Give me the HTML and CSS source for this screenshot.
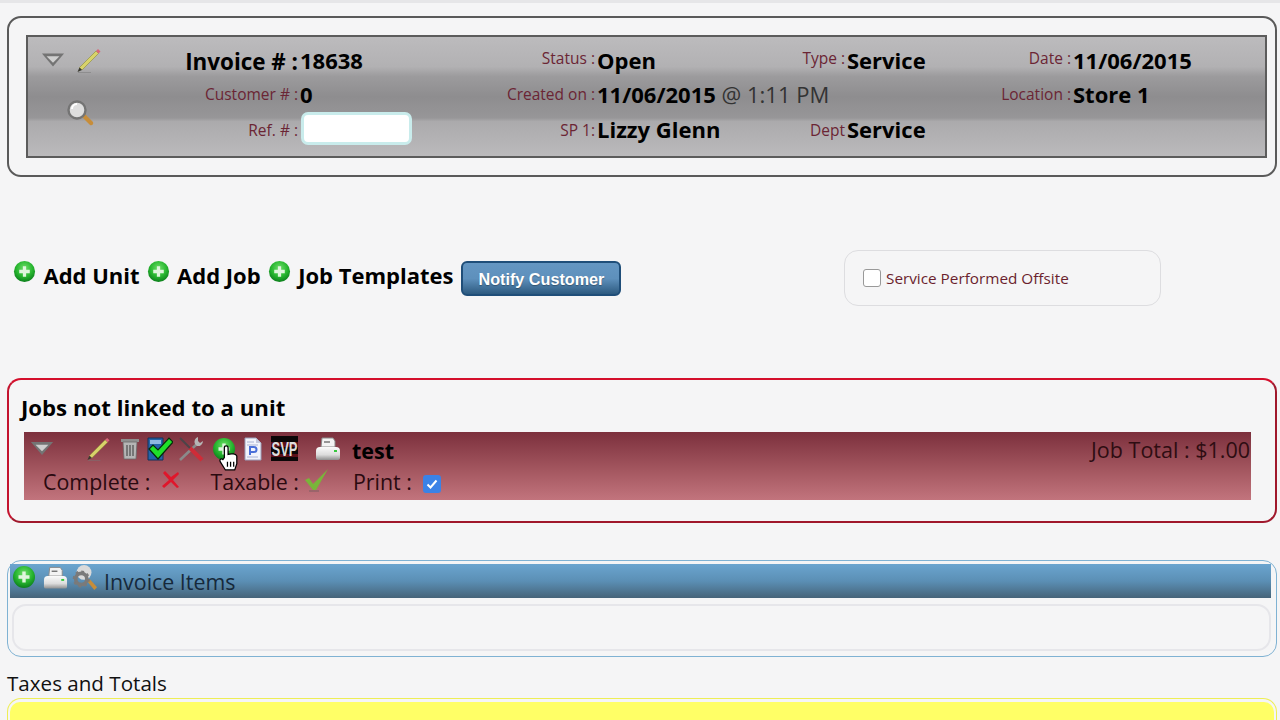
FILE: index.html
```html
<!DOCTYPE html>
<html lang="en">
  <head>
    <meta charset="UTF-8" />
    <title>Invoice 18638</title>
    <link rel="stylesheet" href="styles.css">
  </head>
  <body>
    <!-- Shared icons -->
    <svg class="icon-defs" width="0" height="0">
      <defs>
        <radialGradient id="greenBall" cx="50%" cy="35%" r="65%">
          <stop offset="0%" stop-color="#6fe06a" />
          <stop offset="60%" stop-color="#27b52f" />
          <stop offset="100%" stop-color="#0c7f1c" />
        </radialGradient>
        <linearGradient id="printerBody" x1="0" y1="0" x2="0" y2="1">
          <stop offset="0%" stop-color="#fbfbfb" />
          <stop offset="60%" stop-color="#dcdcdc" />
          <stop offset="100%" stop-color="#8f8f8f" />
        </linearGradient>
        <symbol id="i-plus" viewBox="0 0 24 24">
          <circle cx="12" cy="12" r="11" fill="url(#greenBall)" />
          <path d="M12 6.500v11M6.500 12h11" stroke="#dff5dd" stroke-width="3.400" fill="none" />
        </symbol>
        <symbol id="i-arrow" viewBox="0 0 26 16">
          <path d="M1 1h24L13 15z" fill="#747474" />
          <path d="M6 4h14l-7 7z" fill="#cfcfcf" />
        </symbol>
        <symbol id="i-pencil" viewBox="0 0 26 26">
          <path d="M3.500 20.500L20 4l2.500 2.500L6 23z" fill="#d8d36a" stroke="#8b8a3a" stroke-width=".6" />
          <path d="M20 4l2-2 2.500 2.500-2 2z" fill="#d9667a" />
          <path d="M1.500 25l2-4.500L6 23z" fill="#3a3a30" />
          <path d="M2 25.500h13" stroke="#777" stroke-opacity=".5" stroke-width="1" />
        </symbol>
        <symbol id="i-glass" viewBox="0 0 28 28">
          <path d="M16 17l3-3 8 8c1 2-1 4-3 3z" fill="#c78d3a" />
          <circle cx="11" cy="10" r="8.500" fill="#dedede" stroke="#747474" stroke-width="2.400" />
          <path d="M6 9a5 5 0 0 1 5-5" stroke="#fff" stroke-width="2" fill="none" />
        </symbol>
        <symbol id="i-trash" viewBox="0 0 20 22">
          <path d="M1 1h18v3H1z" fill="#8f8f8f" />
          <path d="M3 4h14l-1 17H4z" fill="#b5b5b5" stroke="#6a6a6a" stroke-width=".8" />
          <path d="M7 7v11M10 7v11M13 7v11" stroke="#666" stroke-width="1.600" />
        </symbol>
        <symbol id="i-check-doc" viewBox="0 0 26 24">
          <path d="M1 1h15v22H1z" fill="#2464a8" stroke="#12305a" />
          <path d="M3 3h11v4H3z" fill="#8db8e0" />
          <path d="M2 12l4-4 5 5L22 1l4 4-15 17z" fill="#1fe02a" stroke="#062a0a" stroke-width="1.200" />
        </symbol>
        <symbol id="i-tools" viewBox="0 0 26 26">
          <path d="M2 24L20 7" stroke="#8a8a8a" stroke-width="2.600" />
          <path d="M20 1a5 5 0 0 0-3 7l2 2a5 5 0 0 0 6-5l-3 2-2-2z" fill="#b5b5b5" />
          <path d="M2 2l11 11" stroke="#4c4448" stroke-width="2" />
          <path d="M12 12l12 12" stroke="#cf2c38" stroke-width="4" />
        </symbol>
        <symbol id="i-doc" viewBox="0 0 18 24">
          <path d="M1 1h11l5 5v17H1z" fill="#f1f3fb" stroke="#9aa0bb" />
          <path d="M12 1v5h5z" fill="#c4c9de" />
          <path d="M3 5h7M3 8h11M3 20h11" stroke="#aab3d3" />
          <path d="M6 18V10h4a2.500 2.500 0 0 1 0 5H6" stroke="#4a6fd8" stroke-width="2" fill="none" />
        </symbol>
        <symbol id="i-printer" viewBox="0 0 26 24">
          <path d="M7 1h11l2 3v6H6z" fill="#f3f3f3" stroke="#8a8a8a" />
          <path d="M9 5h6" stroke="#777" stroke-width="1.500" />
          <path d="M1 14a4 4 0 0 1 4-4h16a4 4 0 0 1 4 4v7a2 2 0 0 1-2 2H3a2 2 0 0 1-2-2z" fill="url(#printerBody)" />
          <path d="M19 14h3" stroke="#35c83d" stroke-width="2" />
        </symbol>
        <symbol id="i-gear-glass" viewBox="0 0 28 28">
          <path d="M16 17l3-2 8 9-3 3z" fill="#c78d3a" />
          <circle cx="13" cy="8" r="8" fill="#dadada" />
          <circle cx="10" cy="15" r="6" fill="none" stroke="#7a7a7a" stroke-width="4" />
          <circle cx="10" cy="15" r="8.200" fill="none" stroke="#7a7a7a" stroke-width="2" stroke-dasharray="3 3.400" />
        </symbol>
        <symbol id="i-cross" viewBox="0 0 20 20">
          <path d="M2 3l2-2 6 6 7-5 1 2-6 6 6 7-2 1-6-6-7 6-2-2 7-6z" fill="#e0162b" />
        </symbol>
        <symbol id="i-tick" viewBox="0 0 26 24">
          <path d="M1 12l4-2 4 6L24 1l-12 21h-3z" fill="#79b53a" />
          <path d="M5 23h10" stroke="#555" stroke-opacity=".4" stroke-width="1.500" />
        </symbol>
      </defs>
    </svg>

    <div class="strip"></div>

    <!-- Invoice header -->
    <div class="invoice-box">
      <div class="invoice-panel">
        <div class="tools-top">
          <svg class="ic-arrow"><use href="#i-arrow" /></svg>
          <svg class="ic-pencil"><use href="#i-pencil" /></svg>
        </div>
        <div class="label head">Invoice # :</div>
        <div class="value">18638</div>
        <div class="label raised">Status :</div>
        <div class="value">Open</div>
        <div class="label raised">Type :</div>
        <div class="value">Service</div>
        <div class="label raised">Date :</div>
        <div class="value">11/06/2015</div>

        <div class="tools-low">
          <svg class="ic-glass"><use href="#i-glass" /></svg>
        </div>
        <div class="label">Customer # :</div>
        <div class="value">0</div>
        <div class="label">Created on :</div>
        <div class="value">11/06/2015 <span class="time">@ 1:11 PM</span></div>
        <div class="skip"></div>
        <div class="label">Location :</div>
        <div class="value">Store 1</div>

        <div class="label low">Ref. # :</div>
        <div class="value"><input class="ref-input" type="text" /></div>
        <div class="label low">SP 1:</div>
        <div class="value">Lizzy Glenn</div>
        <div class="label low">Dept</div>
        <div class="value">Service</div>
      </div>
    </div>

    <!-- Add links -->
    <div class="actions">
      <div class="add-links">
        <svg class="ic-plus"><use href="#i-plus" /></svg>
        <span class="add-text">Add Unit</span>
        <svg class="ic-plus"><use href="#i-plus" /></svg>
        <span class="add-text">Add Job</span>
        <svg class="ic-plus"><use href="#i-plus" /></svg>
        <span class="add-text">Job Templates</span>
        <button class="notify">Notify Customer</button>
      </div>
      <label class="offsite">
        <span class="check-empty"></span>
        Service Performed Offsite
      </label>
    </div>

    <!-- Jobs -->
    <div class="jobs-box">
      <div class="jobs-title">Jobs not linked to a unit</div>
      <div class="job-band">
        <div class="job-row">
          <svg class="ic-arrow job-arrow"><use href="#i-arrow" /></svg>
          <svg class="ic-pencil job-pencil"><use href="#i-pencil" /></svg>
          <svg class="job-trash"><use href="#i-trash" /></svg>
          <svg class="job-check"><use href="#i-check-doc" /></svg>
          <svg class="job-tools"><use href="#i-tools" /></svg>
          <span class="job-plus">
            <svg class="ic-plus"><use href="#i-plus" /></svg>
            <svg class="hand" viewBox="0 0 20 26">
              <path d="M6 13V3.500a1.800 1.800 0 0 1 3.600 0V10c3-1 7.400-.6 8.400 1.500V19l-2 6H7l-5-8c-1-2 1-3.500 2.600-2z" fill="#fff" stroke="#000" stroke-width="1.200" />
              <path d="M9 17v5M12 17v5M15 17v5" stroke="#000" stroke-width="1.200" />
            </svg>
          </span>
          <svg class="job-doc"><use href="#i-doc" /></svg>
          <svg class="job-logo" viewBox="0 0 27 25">
            <rect width="27" height="25" fill="#0c0708" />
            <path d="M0 6h27v5H0zM0 18h27v3H0z" fill="#5a1018" />
            <text x=".5" y="12.500" transform="scale(1 1.600)" font-family="Liberation Sans" font-size="13" font-weight="700" fill="#ddd">SVP</text>
          </svg>
          <svg class="job-printer"><use href="#i-printer" /></svg>
          <span class="job-name">test</span>
          <span class="job-total">Job Total : $1.00</span>
        </div>
        <div class="job-row job-flags">
          <span>Complete :</span>
          <svg class="flag-cross"><use href="#i-cross" /></svg>
          <span class="flag-taxable">Taxable :</span>
          <svg class="flag-tick"><use href="#i-tick" /></svg>
          <span class="flag-print">Print :</span>
          <span class="check-on">
            <svg viewBox="0 0 18 18"><path d="M4.500 9.500l3 3 6-7" stroke="#fff" stroke-width="2" fill="none" /></svg>
          </span>
        </div>
      </div>
    </div>

    <!-- Invoice items -->
    <div class="items-box">
      <div class="items-head">
        <svg class="ic-plus"><use href="#i-plus" /></svg>
        <svg class="items-printer"><use href="#i-printer" /></svg>
        <svg class="items-gear"><use href="#i-gear-glass" /></svg>
        <span class="items-title">Invoice Items</span>
      </div>
      <div class="items-body"></div>
    </div>

    <div class="totals-title">Taxes and Totals</div>
    <div class="totals-box">
      <div class="totals-fill"></div>
    </div>
  </body>
</html>
```

FILE: styles.css
```css
html,
body {
  height: 720px;
  overflow: hidden;
}
body {
  margin: 0;
  padding: 0;
  background-color: #f5f5f6;
  font-family: "Open Sans", sans-serif;
  color: #000;
}
svg {
  display: block;
  flex: none;
}
.icon-defs {
  position: absolute;
}
.strip {
  height: 3px;
  background-color: #e6e6e8;
}

/* Invoice header */
.invoice-box {
  margin: 13px 3px 0 7px;
  height: 161px;
  box-sizing: border-box;
  padding: 17px 8px 0 17px;
  border: 2px solid #5a5a5a;
  border-radius: 14px;
}
.invoice-panel {
  box-sizing: border-box;
  height: 123px;
  padding: 6px 0 0;
  border: 2px solid #5c5c5c;
  background: linear-gradient(to bottom, #bcbbbd 0%, #b2b1b3 25%, #9c9b9d 33%, #8e8d8f 50%, #979698 68%, #abaaac 71%, #bbbabc 100%);
  display: grid;
  grid-template-columns: 80px 190px 202px 95px 186px 64px 115px 111px 1fr;
  grid-template-rows: 33px 35px 35px;
  align-items: center;
}
.tools-top {
  display: flex;
  align-items: center;
  padding-left: 13px;
}
.tools-low {
  grid-row: 2 / 4;
  grid-column: 1;
  padding: 6px 0 0 38px;
}
.skip {
  grid-column: span 2;
}
.ic-arrow {
  width: 24px;
  height: 16px;
}
.ic-pencil {
  width: 26px;
  height: 26px;
  margin-left: 11px;
}
.ic-glass {
  width: 28px;
  height: 28px;
}
.label {
  text-align: right;
  font-size: 15.500px;
  color: #6b2534;
  white-space: nowrap;
}
.label.raised {
  padding-bottom: 4px;
}
.label.low {
  padding-top: 2px;
}
.label.head {
  font-size: 22.400px;
  font-weight: 700;
  color: #000;
  padding-top: 3px;
}
.value {
  font-size: 22px;
  font-weight: 700;
  padding-left: 2px;
  white-space: nowrap;
  line-height: 30px;
}
.time {
  font-weight: 400;
  color: #333;
}
.ref-input {
  display: block;
  box-sizing: border-box;
  width: 111px;
  height: 33px;
  margin-left: 1px;
  border: 3px solid #c9ecec;
  border-radius: 7px;
  background-color: #fff;
  outline: none;
}

/* Add links */
.actions {
  display: flex;
  align-items: center;
  margin: 73px 0 0 13px;
  height: 56px;
}
.add-links {
  display: flex;
  align-items: center;
  width: 831px;
}
.ic-plus {
  width: 23px;
  height: 23px;
  margin-bottom: 14px;
}
.add-text {
  font-size: 22px;
  font-weight: 700;
  margin: 0 7px 0 7.500px;
  padding-bottom: 7px;
  white-space: nowrap;
}
.notify {
  box-sizing: border-box;
  width: 160px;
  height: 35px;
  margin-left: 1px;
  padding: 3px 0 0;
  border: 2px solid #1f4e79;
  border-radius: 6px;
  background: linear-gradient(to bottom, #6496c2 0%, #5e90bc 50%, #2d5a80 100%);
  color: #fff;
  font-family: "Liberation Sans", sans-serif;
  font-size: 16.200px;
  font-weight: 700;
  text-shadow: 0 1px 1px rgba(0, 0, 0, 0.3);
}
.offsite {
  box-sizing: border-box;
  width: 317px;
  height: 56px;
  display: flex;
  align-items: center;
  padding-left: 18px;
  gap: 5px;
  border: 1px solid #dddde0;
  border-radius: 14px;
  font-size: 15.300px;
  color: #6b1f2e;
}
.check-empty {
  box-sizing: border-box;
  width: 18px;
  height: 18px;
  background-color: #fff;
  border: 1px solid #999;
  border-radius: 3px;
}

/* Jobs */
.jobs-box {
  box-sizing: border-box;
  margin: 72px 3px 0 7px;
  height: 145px;
  padding: 13px 24px 0 12px;
  border: 2px solid #c4142f;
  border-top-color: #d40f2c;
  border-bottom-color: #a0182c;
  border-right-color: #a0182c;
  border-radius: 14px;
}
.jobs-title {
  font-size: 22.200px;
  font-weight: 700;
  line-height: 30px;
  margin-bottom: 9px;
}
.job-band {
  margin-left: 3px;
  height: 68px;
  background: linear-gradient(to bottom, #7c303d 0%, #a3565f 55%, #c2747d 100%);
}
.job-row {
  display: flex;
  align-items: center;
  height: 36px;
}
.job-row > svg,
.job-plus {
  margin-bottom: 3px;
}
.job-arrow {
  width: 24px;
  height: 15px;
  margin-left: 6px;
}
.job-pencil {
  width: 25px;
  height: 25px;
  margin-left: 32px;
}
.job-trash {
  width: 20px;
  height: 22px;
  margin-left: 9px;
}
.job-check {
  width: 26px;
  height: 24px;
  margin-left: 7px;
}
.job-tools {
  width: 26px;
  height: 26px;
  margin-left: 5px;
}
.job-plus {
  position: relative;
  margin-left: 8px;
  width: 24px;
  height: 24px;
}
.job-plus .ic-plus {
  width: 24px;
  height: 24px;
  margin: 0;
}
.hand {
  position: absolute;
  left: 5px;
  top: 7px;
  width: 23px;
  height: 27px;
}
.job-doc {
  width: 18px;
  height: 24px;
  margin-left: 8px;
}
.job-logo {
  margin-left: 9px;
  width: 27px;
  height: 25px;
}
.job-printer {
  width: 26px;
  height: 24px;
  margin-left: 17px;
}
.job-name {
  margin-left: 11px;
  font-size: 21.500px;
  font-weight: 700;
}
.job-total {
  margin-left: auto;
  margin-right: 1px;
  padding-bottom: 2px;
  font-size: 21.500px;
  color: #2e0d12;
}
.job-flags {
  height: 27px;
  padding-left: 19px;
  font-size: 21.400px;
  color: #2a0a10;
}
.flag-cross {
  width: 20px;
  height: 20px;
  margin: 0 0 5px 11px;
}
.flag-taxable {
  margin-left: 29px;
}
.flag-tick {
  width: 26px;
  height: 24px;
  margin: 0 0 4px 5px;
}
.flag-print {
  margin-left: 23px;
}
.check-on {
  width: 18px;
  height: 18px;
  margin: 5px 0 0 11px;
  border-radius: 3px;
  background-color: #3b82e6;
}

/* Invoice items */
.items-box {
  box-sizing: border-box;
  margin: 37px 3px 0 7px;
  height: 97px;
  padding: 3px 5px 0 2px;
  border: 1px solid #7fb2d3;
  border-radius: 14px;
}
.items-head {
  display: flex;
  align-items: center;
  height: 34px;
  padding-left: 2px;
  background: linear-gradient(to bottom, #6ba5cf 0%, #5b8fb5 50%, #466479 100%);
}
.items-head .ic-plus {
  width: 24px;
  height: 24px;
  margin-bottom: 8px;
}
.items-printer {
  width: 25px;
  height: 24px;
  margin: 0 0 7px 7px;
}
.items-gear {
  width: 26px;
  height: 26px;
  margin: 0 0 7px 4px;
}
.items-title {
  margin-left: 6px;
  font-size: 21.400px;
  color: #16293b;
}
.items-body {
  box-sizing: border-box;
  height: 47px;
  margin: 6px 0 0 2px;
  border: 2px solid #e6e6ea;
  border-radius: 14px;
}

/* Totals */
.totals-title {
  margin: 12px 0 0 7px;
  font-size: 20.600px;
  line-height: 28px;
  color: #111;
}
.totals-box {
  box-sizing: border-box;
  margin: 1px 3px 0 7px;
  height: 22px;
  padding: 3px 2px 0;
  border: 1px solid #eeee55;
  border-bottom: none;
  border-radius: 14px 14px 0 0;
}
.totals-fill {
  height: 18px;
  border-radius: 10px 10px 0 0;
  background-color: #ffff66;
}
```
